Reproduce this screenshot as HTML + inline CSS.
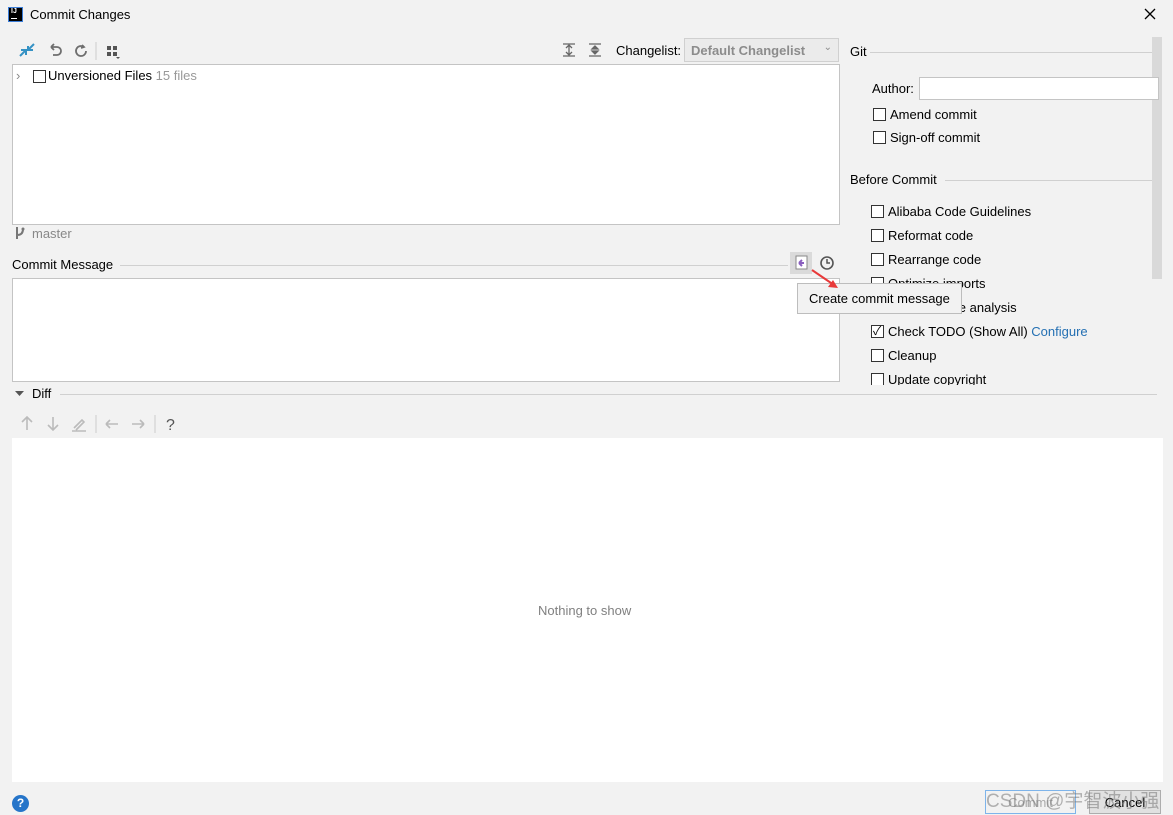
<!DOCTYPE html>
<html><head><style>
*{box-sizing:border-box}
body{margin:0;width:1173px;height:815px;background:#f2f2f2;font-family:"Liberation Sans","Noto Sans CJK SC",sans-serif;font-size:13px;color:#000;position:relative;overflow:hidden}
.a{position:absolute;white-space:nowrap}
.box{position:absolute;background:#fff;border:1px solid #c4c4c4}
.cb{position:absolute;width:13px;height:13px;border:1px solid #333;background:#fff}
.line{position:absolute;height:1px;background:#d0d0d0}
.gray{color:#999}
</style></head><body>
<div class="a" style="left:8px;top:7px;width:15px;height:15px;background:#000;border:1px solid #3b7dd8"><div style="color:#fff;font-size:7px;font-weight:bold;position:absolute;left:2px;top:0">IJ</div><div style="position:absolute;left:2px;bottom:2px;width:6px;height:1px;background:#fff"></div></div>
<div class="a" style="left:30px;top:7px">Commit Changes</div>
<svg class="a" style="left:1144px;top:8px" width="12" height="12"><path d="M1 1L11 11M11 1L1 11" stroke="#000" stroke-width="1.3"/></svg>
<svg class="a" style="left:18px;top:42px" width="110" height="18">
<path d="M2 14 L8 8 M3 8 h5 v5 M16 2 L10 8 M10 4 v4 h5" stroke="#3592c4" stroke-width="2" fill="none"/>
<path d="M33 5 h6 a4 4 0 0 1 0 8 h-4 M33 5 l3 -3 M33 5 l3 3" stroke="#6e6e6e" stroke-width="1.8" fill="none"/>
<path d="M66 5 a5 5 0 1 0 2 4 M64 3 l2 2 -3 1" stroke="#6e6e6e" stroke-width="1.8" fill="none"/>
<line x1="78" y1="0" x2="78" y2="18" stroke="#ccc"/>
<rect x="89" y="4" width="4" height="4" fill="#555"/><rect x="95" y="4" width="4" height="4" fill="#555"/><rect x="89" y="10" width="4" height="4" fill="#555"/><rect x="95" y="10" width="4" height="4" fill="#555"/><path d="M98 15 l2 2 2 -2z" fill="#555"/>
</svg>
<svg class="a" style="left:560px;top:42px" width="50" height="16">
<path d="M3 2h12M3 14h12M9 4v8M6 6l3-3 3 3M6 10l3 3 3-3" stroke="#666" stroke-width="1.3" fill="none"/>
<path d="M29 2h12M29 14h12M35 4l-3 3h6zM35 12l-3-3h6z" stroke="#666" stroke-width="1.3" fill="#666"/>
</svg>
<div class="a" style="left:616px;top:43px">Changelist:</div>
<div class="a" style="left:684px;top:38px;width:155px;height:24px;border:1px solid #d0d0d0;background:#ebebeb;color:#8c8c8c;font-weight:bold;padding:4px 6px">Default Changelist<span style="position:absolute;right:6px;top:3px;font-weight:normal;font-size:10px">⌄</span></div>
<div class="box" style="left:12px;top:64px;width:828px;height:161px"></div>
<div class="a" style="left:16px;top:68px;color:#888">›</div>
<div class="cb" style="left:33px;top:70px"></div>
<div class="a" style="left:48px;top:68px">Unversioned Files <span class="gray">15 files</span></div>
<svg class="a" style="left:14px;top:226px" width="12" height="14"><path d="M3 1v12M3 9 q6 0 6-6" stroke="#777" stroke-width="2" fill="none"/><circle cx="9" cy="3" r="1.5" fill="#777"/></svg>
<div class="a gray" style="left:32px;top:226px;color:#888">master</div>
<div class="a" style="left:12px;top:257px">Commit Message</div>
<div class="line" style="left:120px;top:265px;width:668px"></div>
<div class="a" style="left:790px;top:252px;width:22px;height:22px;background:#dadada"></div>
<svg class="a" style="left:793px;top:254px" width="44" height="18"><rect x="3" y="2" width="11" height="13" fill="#fff" stroke="#888"/><path d="M6 9h5M6 9l3-3M6 9l3 3" stroke="#8a5fbf" stroke-width="2" fill="none"/><circle cx="34" cy="9" r="6" stroke="#555" stroke-width="1.6" fill="none"/><path d="M34 5v4h3" stroke="#555" stroke-width="1.5" fill="none"/></svg>
<div class="box" style="left:12px;top:278px;width:828px;height:104px"></div>
<div class="a" style="left:850px;top:44px">Git</div>
<div class="line" style="left:870px;top:52px;width:282px"></div>
<div class="a" style="left:1152px;top:37px;width:10px;height:242px;background:#d9d9d9"></div>
<div class="a" style="left:872px;top:81px">Author:</div>
<div class="a" style="left:919px;top:77px;width:240px;height:23px;background:#fff;border:1px solid #c4c4c4"></div>
<div class="cb" style="left:873px;top:108px"></div><div class="a" style="left:890px;top:107px">Amend commit</div>
<div class="cb" style="left:873px;top:131px"></div><div class="a" style="left:890px;top:130px">Sign-off commit</div>
<div class="a" style="left:850px;top:172px">Before Commit</div>
<div class="line" style="left:945px;top:180px;width:207px"></div>
<div style="position:absolute;left:860px;top:200px;width:290px;height:185px;overflow:hidden">
<div class="cb" style="left:11px;top:5px"></div><div class="a" style="left:28px;top:4px">Alibaba Code Guidelines</div>
<div class="cb" style="left:11px;top:29px"></div><div class="a" style="left:28px;top:28px">Reformat code</div>
<div class="cb" style="left:11px;top:53px"></div><div class="a" style="left:28px;top:52px">Rearrange code</div>
<div class="cb" style="left:11px;top:77px"></div><div class="a" style="left:28px;top:76px">Optimize imports</div>
<div class="cb" style="left:11px;top:101px"></div><div class="a" style="left:28px;top:100px">Perform code analysis</div>
<div class="cb" style="left:11px;top:125px"></div><div class="a" style="left:13px;top:122px;font-size:12px">✓</div><div class="a" style="left:28px;top:124px">Check TODO (Show All) <span style="color:#2470b3">Configure</span></div>
<div class="cb" style="left:11px;top:149px"></div><div class="a" style="left:28px;top:148px">Cleanup</div>
<div class="cb" style="left:11px;top:173px"></div><div class="a" style="left:28px;top:172px">Update copyright</div>
</div>
<div class="a" style="left:797px;top:283px;width:165px;height:31px;background:#f2f2f2;border:1px solid #bdbdbd;padding:7px 0 0 11px">Create commit message</div>
<svg class="a" style="left:810px;top:268px" width="40" height="24"><path d="M2 2 L24 17" stroke="#e83a3a" stroke-width="2"/><path d="M28 20 l-10 -1 5 -7z" fill="#e83a3a"/></svg>
<svg class="a" style="left:15px;top:390px" width="10" height="8"><path d="M0 1h9l-4.5 5z" fill="#555"/></svg>
<div class="a" style="left:32px;top:386px">Diff</div>
<div class="line" style="left:60px;top:394px;width:1097px"></div>
<svg class="a" style="left:18px;top:414px" width="170" height="20">
<g stroke="#bbb" stroke-width="1.6" fill="none"><path d="M9 3v13M4 8l5-5 5 5"/><path d="M35 3v13M30 11l5 5 5-5"/><path d="M56 14l8-8 2 2-8 8M54 17h14"/><path d="M88 10h12M88 10l4-4M88 10l4 4"/><path d="M114 10h12M126 10l-4-4M126 10l-4 4"/></g>
<line x1="78" y1="1" x2="78" y2="19" stroke="#ccc"/><line x1="137" y1="1" x2="137" y2="19" stroke="#ccc"/>
<text x="148" y="16" font-family="Liberation Sans" font-size="16" fill="#555">?</text>
</svg>
<div class="a" style="left:12px;top:438px;width:1151px;height:344px;background:#fff"></div>
<div class="a" style="left:538px;top:603px;color:#808080">Nothing to show</div>
<div class="a" style="left:12px;top:795px;width:17px;height:17px;border-radius:50%;background:#2675c9;color:#fff;font-size:12px;font-weight:bold;text-align:center;line-height:17px">?</div>
<div class="a" style="left:985px;top:790px;width:91px;height:24px;border:1px solid #7eb4ea;background:#f2f2f2;color:#aaa;text-align:center;padding-top:4px">Commit</div>
<div class="a" style="left:1089px;top:790px;width:72px;height:24px;border:1px solid #adadad;background:#e1e1e1;text-align:center;padding-top:4px">Cancel</div>
<div class="a" style="left:986px;top:786px;font-size:19px;color:rgba(120,120,120,.55)">CSDN @宇智波小强</div>
</body></html>
